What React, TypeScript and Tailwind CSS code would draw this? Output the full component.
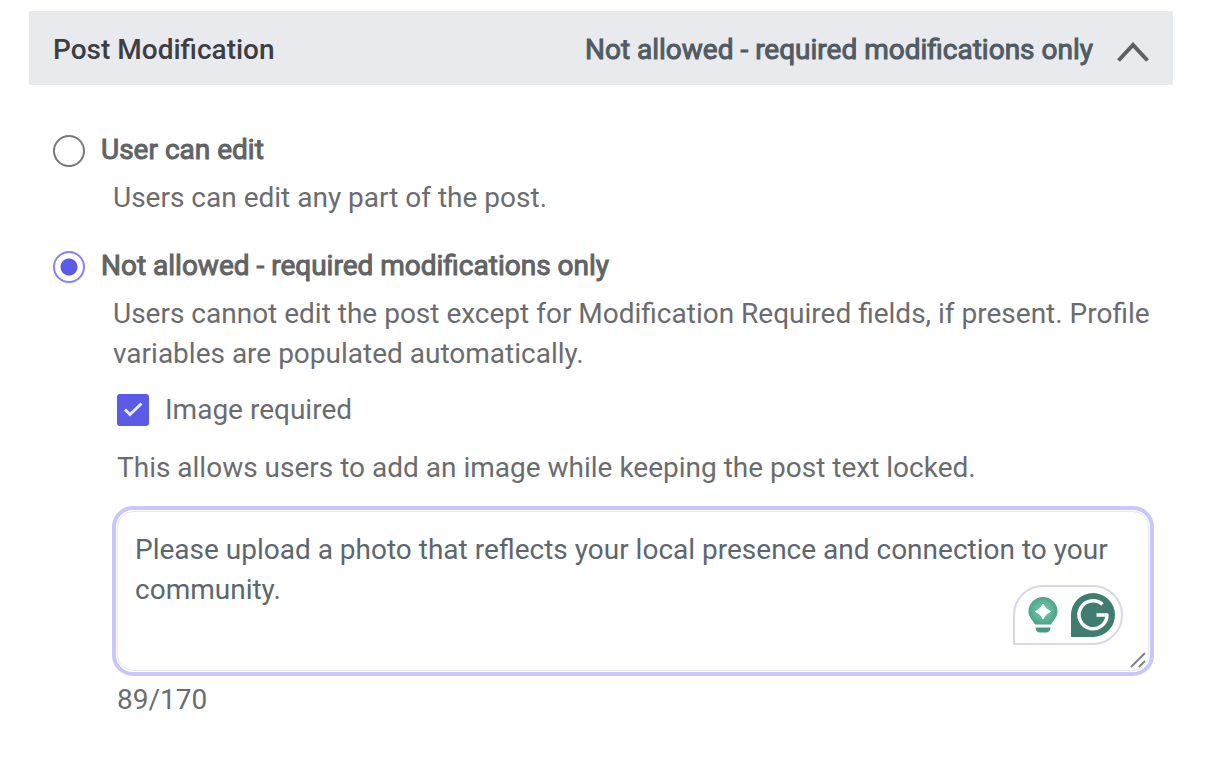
import React, { useState } from 'react'

const LIMIT = 170
const REQUIRED_ONLY = 'Not allowed - required modifications only'

const Chevron = () => (
    <svg className="mt-1 ml-6 h-5 w-8" viewBox="0 0 32 20" fill="none" stroke="#5f6063" strokeWidth="4">
        <path d="M1.500 18.500 16 3l14.500 15.500" />
    </svg>
)

const Radio = ({ id, value, title, checked, onSelect, children }: {
    id: string
    value: string
    title: string
    checked: boolean
    onSelect: (value: string) => void
    children: React.ReactNode
}) => (
    <div>
        <div className="flex items-center gap-4">
            <input
                id={id}
                type="radio"
                name="modification"
                value={value}
                checked={checked}
                onChange={() => onSelect(value)}
                aria-describedby={`${id}-help`}
                className="mt-[2px] size-8 shrink-0 appearance-none rounded-full border-2 border-[#77787a] bg-white checked:border-[#8583f2] checked:bg-[radial-gradient(circle,#5b5be8_0_8px,white_9px)]"
            />
            <label htmlFor={id} className="text-[#616365] [-webkit-text-stroke:1px]">{title}</label>
        </div>
        <p id={`${id}-help`} className="mt-2 pl-[60px]">{children}</p>
    </div>
)

const Assistant = () => (
    <div className="absolute right-[26px] bottom-[26px] flex h-[60px] w-[110px] items-center justify-between rounded-[30px] rounded-bl-none border-2 border-[#d7d9e6] bg-white pr-[6px] pl-[13px]">
        <button type="button" aria-label="Suggestions">
            <svg className="h-[38px] w-[30px]" viewBox="0 0 30 38">
                <defs>
                    <radialGradient id="bulb">
                        <stop offset="0.3" stopColor="#6cc2a5" />
                        <stop offset="1" stopColor="#4da58a" />
                    </radialGradient>
                </defs>
                <path d="M15 1a14.500 14.500 0 0 0-14.500 14.500c0 5 3.500 8 6.500 13h16c3-5 6.500-8 6.500-13A14.500 14.500 0 0 0 15 1Z" fill="url(#bulb)" />
                <path d="M15 8q2 5.500 7.500 7.500-5.500 2-7.500 7.500-2-5.500-7.500-7.500 5.500-2 7.500-7.500Z" fill="#fff" stroke="#fff" strokeLinejoin="round" />
                <path d="M7.500 31.500h15c0 3-2 5-5 5h-5c-3 0-5-2-5-5Z" fill="#439a80" />
            </svg>
        </button>
        <button type="button" aria-label="Check writing">
            <svg className="size-11" viewBox="0 0 44 44" fill="none">
                <path d="M0 22a22 22 0 1 1 22 22H0Z" fill="#3f7d70" />
                <path d="M31.500 11.500A14 14 0 1 0 36 22H25.500" stroke="#fff" strokeWidth="3.500" strokeLinejoin="round" />
            </svg>
        </button>
    </div>
)

const App = () => {
    const [open, setOpen] = useState(true)
    const [choice, setChoice] = useState('required')
    const [imageRequired, setImageRequired] = useState(true)
    const [note, setNote] = useState('Please upload a photo that reflects your local presence and connection to your community.')

    return (
        <main className="min-h-screen bg-white pt-[11px] pr-[33px] pb-10 pl-[29px] font-[Roboto,sans-serif] text-[28px] leading-10 text-[#6a6c6f]">
            <button
                type="button"
                aria-expanded={open}
                onClick={() => setOpen(!open)}
                className="flex w-full items-center bg-[#e9eaee] px-6 pt-[19px] pb-[15px] text-left"
            >
                <span className="flex-1 font-medium text-[#3b3e43]">Post Modification</span>
                <span className="text-[#505b63] [-webkit-text-stroke:1px]">{choice === 'required' ? REQUIRED_ONLY : 'User can edit'}</span>
                <Chevron />
            </button>
            {open && (
                <section className="pt-[45px] pl-6">
                    <div className="flex flex-col gap-7">
                        <Radio id="can-edit" value="edit" title="User can edit" checked={choice === 'edit'} onSelect={setChoice}>
                            Users can edit any part of the post.
                        </Radio>
                        <Radio id="required-only" value="required" title={REQUIRED_ONLY} checked={choice === 'required'} onSelect={setChoice}>
                            Users cannot edit the post except for Modification Required fields, if present. Profile variables are populated automatically.
                        </Radio>
                    </div>
                    <div className="pr-6 pl-16">
                        <label className="mt-4 flex items-center gap-4">
                            <span className="grid size-8">
                                <input
                                    type="checkbox"
                                    checked={imageRequired}
                                    onChange={(e) => setImageRequired(e.target.checked)}
                                    className="col-start-1 row-start-1 size-8 appearance-none rounded-[3px] border-2 border-[#77787a] checked:border-[#5b5be8] checked:bg-[#5b5be8]"
                                />
                                <svg className="pointer-events-none col-start-1 row-start-1 size-8" viewBox="0 0 32 32" fill="none" stroke="#e9e9ff" strokeWidth="3">
                                    <path d="m8 15.500 5 5L24.500 9.500" />
                                </svg>
                            </span>
                            Image required
                        </label>
                        <p id="note-help" className="mt-[18px]">This allows users to add an image while keeping the post text locked.</p>
                        <div className="relative mt-[23px]">
                            <textarea
                                rows={3}
                                maxLength={LIMIT}
                                value={note}
                                onChange={(e) => setNote(e.target.value)}
                                aria-label="Image instructions"
                                aria-describedby="note-help"
                                className="block w-full resize-none rounded-2xl border border-[#e6e5f2] px-[17px] pt-[18px] pb-5 text-[#5c666f] outline-4 outline-offset-1 outline-[#c8c6fa]"
                            />
                            <Assistant />
                            <svg className="absolute right-[3px] bottom-[3px] size-4" viewBox="0 0 16 16" stroke="#858585" strokeWidth="2">
                                <path d="M1 15 15 1M9 15l6-6" />
                            </svg>
                        </div>
                        <p className="mt-[9px]">{note.length}/{LIMIT}</p>
                    </div>
                </section>
            )}
        </main>
    )
}

export default App
